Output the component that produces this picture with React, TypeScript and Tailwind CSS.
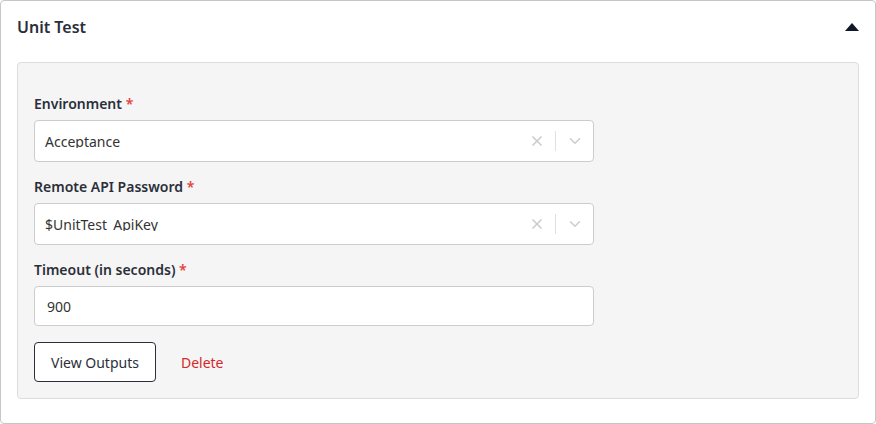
import { X, ChevronDown } from 'lucide-react'

interface SelectFieldProps {
  label: string
  value: string
}

function FieldLabel({ text }: { text: string }) {
  return (
    <label className="mb-[6px] block text-[14px] font-semibold leading-[20px] text-[#2b2f3a]">
      {text} <span className="text-[#e53e3e]">*</span>
    </label>
  )
}

function SelectField({ label, value }: SelectFieldProps) {
  return (
    <div>
      <FieldLabel text={label} />
      <div className="flex h-[42px] w-[560px] items-center rounded-[4px] border border-[#cccccc] bg-white">
        <div className="flex-1 pl-[10px]">
          <span className="block h-[14px] overflow-hidden text-[14px] leading-[15px] text-[#333333]">{value}</span>
        </div>
        <div className="flex h-full items-center">
          <div className="flex w-[36px] items-center justify-center text-[#cccccc]">
            <X size={16} strokeWidth={2.5} />
          </div>
          <div className="h-[20px] w-px bg-[#e0e0e0]" />
          <div className="flex w-[37px] items-center justify-center text-[#cccccc]">
            <ChevronDown size={18} strokeWidth={2} />
          </div>
        </div>
      </div>
    </div>
  )
}

export default function App() {
  return (
    <div className="h-[424px] w-[876px] bg-white font-['Noto_Sans',sans-serif]">
      <div className="h-[424px] w-[876px] rounded-[4px] border border-[#c6c6c6] bg-white px-[16px] pb-[24px] pt-[14px]">
        <div className="flex h-[24px] items-center justify-between">
          <h2 className="text-[16px] font-semibold leading-[24px] text-[#2b2f3a]">Unit Test</h2>
          <svg width="14" height="8" viewBox="0 0 14 8">
            <path d="M7 0 L14 8 L0 8 Z" fill="#0f1729" />
          </svg>
        </div>

        <div className="mt-[23px] rounded-[4px] border border-[#dddddd] bg-[#f5f5f5] px-[16px] pb-[16px] pt-[31px]">
          <div className="flex flex-col gap-[15px]">
            <SelectField label="Environment" value="Acceptance" />
            <SelectField label="Remote API Password" value="$UnitTest_ApiKey" />
            <div>
              <FieldLabel text="Timeout (in seconds)" />
              <div className="flex h-[40px] w-[560px] items-center rounded-[4px] border border-[#cccccc] bg-white pl-[12px] text-[14px] text-[#333333]">
                900
              </div>
            </div>
          </div>

          <div className="mt-[16px] flex items-center gap-[25px]">
            <button
              type="button"
              className="h-[40px] rounded-[4px] border border-[#2b2f3a] bg-white px-[16px] text-[14px] text-[#2b2f3a]"
            >
              View Outputs
            </button>
            <button type="button" className="text-[14px] text-[#d62828]">
              Delete
            </button>
          </div>
        </div>
      </div>
    </div>
  )
}
